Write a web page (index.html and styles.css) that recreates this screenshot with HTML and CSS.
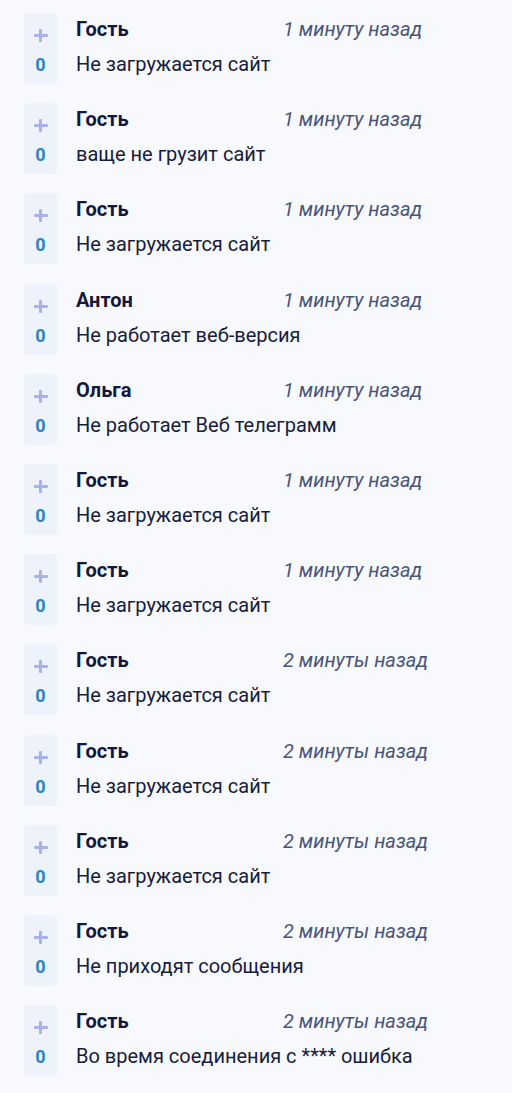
FILE: index.html
```html
<!DOCTYPE html>
<html lang="ru">
<head>
<meta charset="utf-8">
<link rel="stylesheet" href="styles.css">
</head>
<body>
<ul class="list">
  <li class="item"><div class="vote"><span class="plus"></span><span class="count">0</span></div><div class="body"><div class="head"><span class="name">Гость</span><span class="time">1 минуту назад</span></div><div class="text">Не загружается сайт</div></div></li>
  <li class="item"><div class="vote"><span class="plus"></span><span class="count">0</span></div><div class="body"><div class="head"><span class="name">Гость</span><span class="time">1 минуту назад</span></div><div class="text">ваще не грузит сайт</div></div></li>
  <li class="item"><div class="vote"><span class="plus"></span><span class="count">0</span></div><div class="body"><div class="head"><span class="name">Гость</span><span class="time">1 минуту назад</span></div><div class="text">Не загружается сайт</div></div></li>
  <li class="item"><div class="vote"><span class="plus"></span><span class="count">0</span></div><div class="body"><div class="head"><span class="name">Антон</span><span class="time">1 минуту назад</span></div><div class="text">Не работает веб-версия</div></div></li>
  <li class="item"><div class="vote"><span class="plus"></span><span class="count">0</span></div><div class="body"><div class="head"><span class="name">Ольга</span><span class="time">1 минуту назад</span></div><div class="text">Не работает Веб телеграмм</div></div></li>
  <li class="item"><div class="vote"><span class="plus"></span><span class="count">0</span></div><div class="body"><div class="head"><span class="name">Гость</span><span class="time">1 минуту назад</span></div><div class="text">Не загружается сайт</div></div></li>
  <li class="item"><div class="vote"><span class="plus"></span><span class="count">0</span></div><div class="body"><div class="head"><span class="name">Гость</span><span class="time">1 минуту назад</span></div><div class="text">Не загружается сайт</div></div></li>
  <li class="item"><div class="vote"><span class="plus"></span><span class="count">0</span></div><div class="body"><div class="head"><span class="name">Гость</span><span class="time">2 минуты назад</span></div><div class="text">Не загружается сайт</div></div></li>
  <li class="item"><div class="vote"><span class="plus"></span><span class="count">0</span></div><div class="body"><div class="head"><span class="name">Гость</span><span class="time">2 минуты назад</span></div><div class="text">Не загружается сайт</div></div></li>
  <li class="item"><div class="vote"><span class="plus"></span><span class="count">0</span></div><div class="body"><div class="head"><span class="name">Гость</span><span class="time">2 минуты назад</span></div><div class="text">Не загружается сайт</div></div></li>
  <li class="item"><div class="vote"><span class="plus"></span><span class="count">0</span></div><div class="body"><div class="head"><span class="name">Гость</span><span class="time">2 минуты назад</span></div><div class="text">Не приходят сообщения</div></div></li>
  <li class="item"><div class="vote"><span class="plus"></span><span class="count">0</span></div><div class="body"><div class="head"><span class="name">Гость</span><span class="time">2 минуты назад</span></div><div class="text">Во время соединения с **** ошибка</div></div></li>
</ul>
</body>
</html>
```
FILE: styles.css
```css
html, body {
  margin: 0;
  padding: 0;
  background: #f8f9fc;
  font-family: Roboto, "Liberation Sans", sans-serif;
}
.list {
  list-style: none;
  margin: 0;
  padding: 13px 0 0 24px;
  display: flex;
  flex-direction: column;
  gap: 19.2px;
}
.item {
  display: flex;
  gap: 19px;
  align-items: flex-start;
}
.vote {
  width: 33px;
  height: 71px;
  box-sizing: border-box;
  background: #eef2fa;
  border-radius: 4px;
  display: flex;
  flex-direction: column;
  align-items: center;
  padding-top: 16px;
}
.plus {
  position: relative;
  width: 14px;
  height: 13px;
  flex: none;
}
.plus::before, .plus::after {
  content: "";
  position: absolute;
  background: #a9b2e6;
  border-radius: 1px;
}
.plus::before {
  left: 0; right: 0; top: 5px; height: 3px;
}
.plus::after {
  top: 0; bottom: 0; left: 5.5px; width: 3px;
}
.count {
  margin-top: 13px;
  font-size: 18px;
  font-weight: 700;
  line-height: 20px;
  color: #2a86c4;
}
.body {
  padding-top: 4px;
}
.head {
  display: grid;
  grid-template-columns: 207px auto;
  line-height: 24px;
  font-size: 20px;
}
.name {
  font-weight: 700;
  color: #13183a;
}
.time {
  font-style: italic;
  color: #4a5479;
}
.text {
  margin-top: 11px;
  font-size: 20px;
  line-height: 24px;
  color: #171c3c;
}
```
